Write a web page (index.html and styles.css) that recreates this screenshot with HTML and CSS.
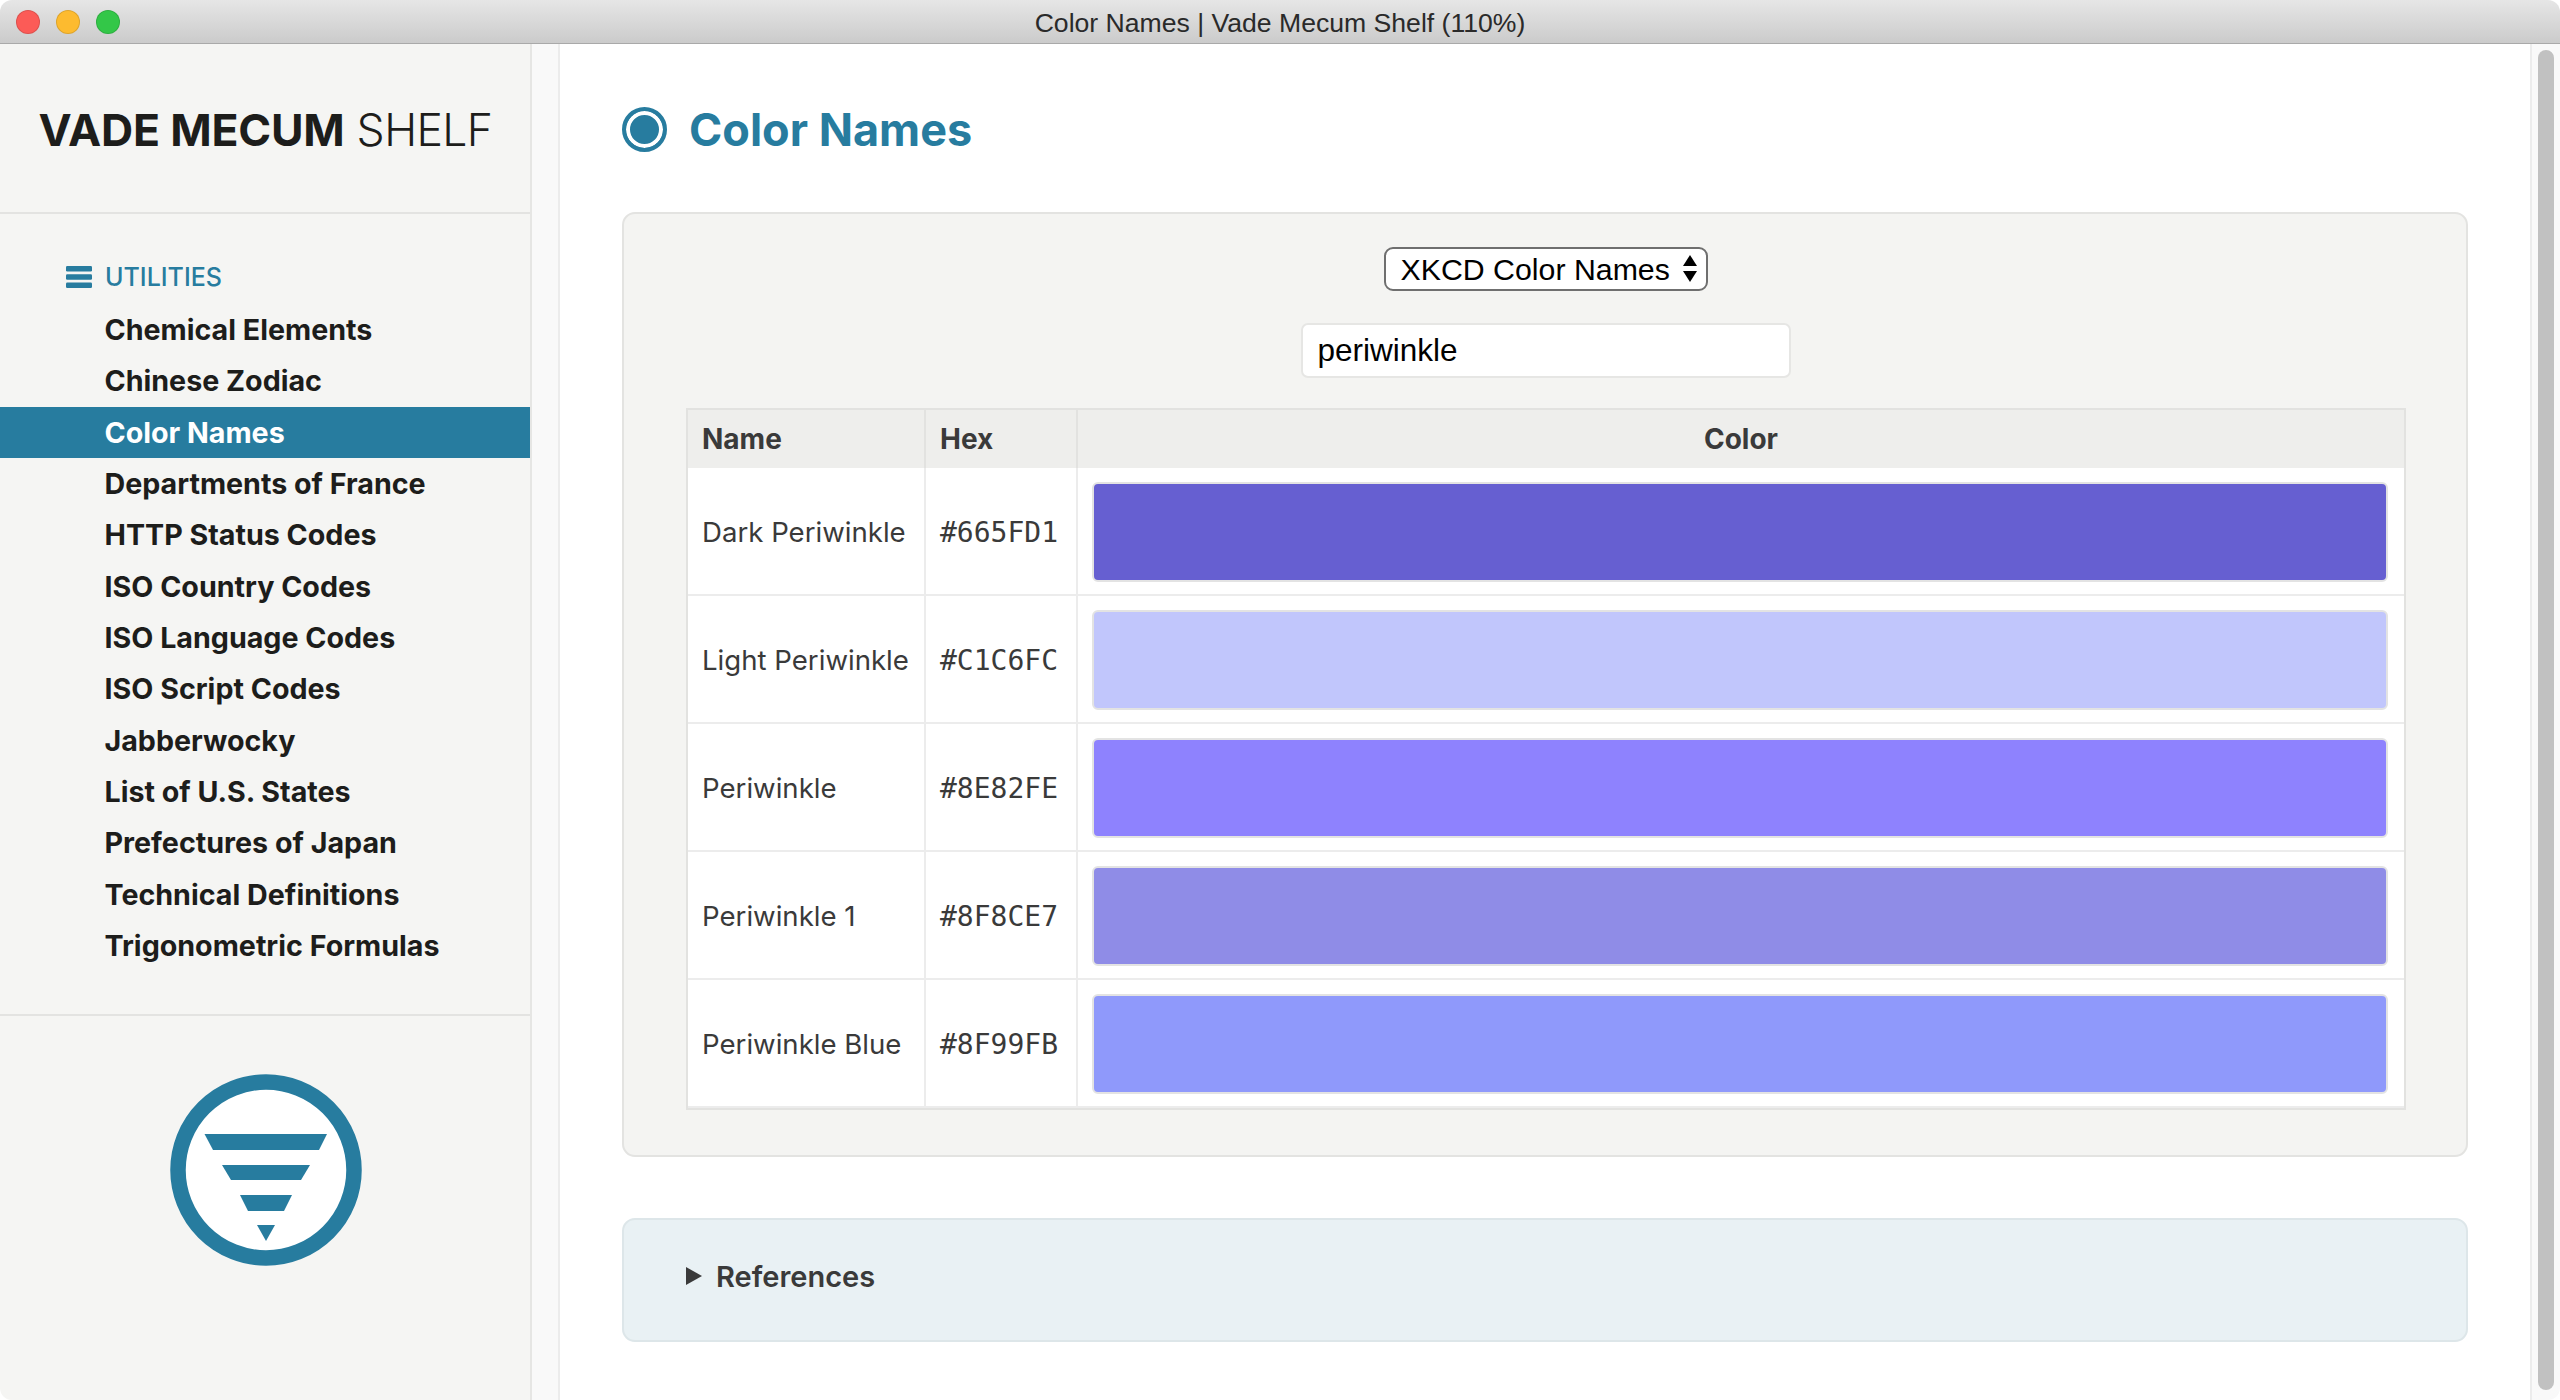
FILE: index.html
```html
<!DOCTYPE html>
<html lang="en">
<head>
    <meta charset="UTF-8">
    <title>Color Names | Vade Mecum Shelf (110%)</title>
    <link rel="stylesheet" href="styles.css">
</head>
<body>
    <div class="window">
        <div class="titlebar">
            <div class="lights">
                <span class="light light-red"></span>
                <span class="light light-yellow"></span>
                <span class="light light-green"></span>
            </div>
            <div class="window-title">Color Names | Vade Mecum Shelf (110%)</div>
        </div>

        <div class="app">
            <aside class="sidebar">
                <div class="brand"><b>VADE MECUM</b> SHELF</div>

                <nav class="nav">
                    <div class="nav-heading">
                        <svg class="nav-icon" viewBox="0 0 26 22">
                            <rect x="0" y="0" width="26" height="5.4" rx="1.2"/>
                            <rect x="0" y="8.3" width="26" height="5.4" rx="1.2"/>
                            <rect x="0" y="16.6" width="26" height="5.4" rx="1.2"/>
                        </svg>
                        <span>UTILITIES</span>
                    </div>
                    <a class="nav-item" href="#">Chemical Elements</a>
                    <a class="nav-item" href="#">Chinese Zodiac</a>
                    <a class="nav-item active" href="#">Color Names</a>
                    <a class="nav-item" href="#">Departments of France</a>
                    <a class="nav-item" href="#">HTTP Status Codes</a>
                    <a class="nav-item" href="#">ISO Country Codes</a>
                    <a class="nav-item" href="#">ISO Language Codes</a>
                    <a class="nav-item" href="#">ISO Script Codes</a>
                    <a class="nav-item" href="#">Jabberwocky</a>
                    <a class="nav-item" href="#">List of U.S. States</a>
                    <a class="nav-item" href="#">Prefectures of Japan</a>
                    <a class="nav-item" href="#">Technical Definitions</a>
                    <a class="nav-item" href="#">Trigonometric Formulas</a>
                </nav>

                <div class="sidebar-logo">
                    <svg viewBox="0 0 192 192" width="192" height="192">
                        <circle cx="96" cy="96" r="88" fill="#ffffff" stroke="#277c9f" stroke-width="15.5"/>
                        <g fill="#277c9f">
                            <polygon points="34.5,60 157,60 149,76 43,76"/>
                            <polygon points="52,91 140,91 131,106 61,106"/>
                            <polygon points="70,121 122,121 114,137 78,137"/>
                            <polygon points="87,151 105,151 96,167"/>
                        </g>
                    </svg>
                </div>
            </aside>

            <div class="gutter"></div>

            <main class="content">
                <h1 class="page-title">
                    <span class="title-icon"></span>
                    Color Names
                </h1>

                <section class="card">
                    <div class="select-wrap">
                        <select class="list-select">
                            <option>XKCD Color Names</option>
                        </select>
                        <svg class="select-arrows" viewBox="0 0 14 27">
                            <polygon points="7,0 14,11 0,11"/>
                            <polygon points="0,16 14,16 7,27"/>
                        </svg>
                    </div>

                    <input class="search" type="text" value="periwinkle">

                    <table class="colors">
                        <thead>
                            <tr>
                                <th class="col-name">Name</th>
                                <th class="col-hex">Hex</th>
                                <th class="col-color">Color</th>
                            </tr>
                        </thead>
                        <tbody>
                            <tr>
                                <td class="cell-name">Dark Periwinkle</td>
                                <td class="cell-hex">#665FD1</td>
                                <td class="cell-color"><div class="swatch" style="background-color: #665FD1"></div></td>
                            </tr>
                            <tr>
                                <td class="cell-name">Light Periwinkle</td>
                                <td class="cell-hex">#C1C6FC</td>
                                <td class="cell-color"><div class="swatch" style="background-color: #C1C6FC"></div></td>
                            </tr>
                            <tr>
                                <td class="cell-name">Periwinkle</td>
                                <td class="cell-hex">#8E82FE</td>
                                <td class="cell-color"><div class="swatch" style="background-color: #8E82FE"></div></td>
                            </tr>
                            <tr>
                                <td class="cell-name">Periwinkle 1</td>
                                <td class="cell-hex">#8F8CE7</td>
                                <td class="cell-color"><div class="swatch" style="background-color: #8F8CE7"></div></td>
                            </tr>
                            <tr>
                                <td class="cell-name">Periwinkle Blue</td>
                                <td class="cell-hex">#8F99FB</td>
                                <td class="cell-color"><div class="swatch" style="background-color: #8F99FB"></div></td>
                            </tr>
                        </tbody>
                    </table>
                </section>

                <section class="references">
                    <span class="ref-arrow"></span>
                    <span>References</span>
                </section>
            </main>

            <div class="scrollbar">
                <div class="scroll-thumb"></div>
            </div>
        </div>
    </div>
</body>
</html>
```

FILE: styles.css
```css
html, body {
    margin: 0;
    padding: 0;
    height: 100%;
    background-color: #ffffff;
    overflow: hidden;
}
body {
    font-family: Inter, "Noto Sans", sans-serif;
    color: #3a3a3a;
}
.window {
    height: 1400px;
    display: flex;
    flex-direction: column;
    border-radius: 12px;
    overflow: hidden;
}
.titlebar {
    height: 44px;
    flex: none;
    box-sizing: border-box;
    display: flex;
    align-items: center;
    position: relative;
    background: linear-gradient(#e6e6e6, #cbcbcb);
    border-bottom: 1px solid #a9a9a9;
}
.lights {
    display: flex;
    gap: 16px;
    padding-left: 16px;
}
.light {
    width: 24px;
    height: 24px;
    box-sizing: border-box;
    border-radius: 50%;
    border: 1px solid rgba(0, 0, 0, 0.12);
}
.light-red { background-color: #fc5b57; }
.light-yellow { background-color: #fdbb2f; }
.light-green { background-color: #33c748; }
.window-title {
    position: absolute;
    left: 0;
    right: 0;
    top: 8px;
    text-align: center;
    font-family: "Liberation Sans", sans-serif;
    font-size: 26.6px;
    color: #2a2a2a;
}
.app {
    flex: 1;
    display: flex;
    min-height: 0;
}
.sidebar {
    width: 532px;
    flex: none;
    box-sizing: border-box;
    background-color: #f5f5f3;
    border-right: 2px solid #e6e6e4;
    display: flex;
    flex-direction: column;
}
.brand {
    height: 170px;
    box-sizing: border-box;
    padding: 4px 0 0 1px;
    display: flex;
    align-items: center;
    justify-content: center;
    gap: 12px;
    font-size: 44.5px;
    font-weight: 300;
    letter-spacing: -0.6px;
    color: #1d1d1b;
    border-bottom: 2px solid #e3e3e1;
}
.brand b {
    font-weight: 700;
    letter-spacing: -0.2px;
}
.nav {
    padding: 36px 0 43px;
    border-bottom: 2px solid #e3e3e1;
}
.nav-heading {
    height: 54px;
    display: flex;
    align-items: center;
    gap: 13px;
    padding-left: 66px;
    font-size: 25px;
    font-weight: 500;
    color: #277c9f;
}
.nav-icon {
    width: 26px;
    height: 22px;
    fill: #277c9f;
}
.nav-item {
    display: block;
    height: 51.33px;
    line-height: 51.33px;
    padding-left: 104.5px;
    font-size: 28.65px;
    font-weight: 700;
    color: #1d1d1b;
    text-decoration: none;
}
.nav-item.active {
    background-color: #277c9f;
    color: #ffffff;
}
.sidebar-logo {
    display: flex;
    justify-content: center;
    padding: 58px 0 0 2px;
}
.gutter {
    width: 28px;
    flex: none;
    box-sizing: border-box;
    background-color: #f9f9f9;
    border-right: 2px solid #ececec;
}
.content {
    flex: 1;
    min-width: 0;
    padding: 0 62px;
}
.page-title {
    height: 168px;
    box-sizing: border-box;
    margin: 0;
    padding-top: 2px;
    display: flex;
    align-items: center;
    gap: 22px;
    font-size: 45px;
    font-weight: 700;
    color: #277c9f;
}
.title-icon {
    width: 45px;
    height: 45px;
    box-sizing: border-box;
    border-radius: 50%;
    border: 4px solid #277c9f;
    background-color: #277c9f;
    box-shadow: inset 0 0 0 4px #ffffff;
}
.card {
    box-sizing: border-box;
    background-color: #f4f4f2;
    border: 2px solid #e3e3e1;
    border-radius: 13px;
    padding: 33px 60px 45px 62px;
    display: flex;
    flex-direction: column;
    align-items: center;
}
.select-wrap {
    position: relative;
    height: 44px;
    margin-right: 1px;
}
.list-select {
    appearance: none;
    height: 44px;
    width: 324px;
    box-sizing: border-box;
    padding: 0 0 0 15px;
    border: 2px solid #6f6f6f;
    border-radius: 9px;
    background-color: #ffffff;
    font-family: "Liberation Sans", sans-serif;
    font-size: 30.3px;
    color: #000000;
}
.select-arrows {
    position: absolute;
    top: 8px;
    right: 11px;
    width: 14px;
    height: 27px;
    fill: #000000;
}
.search {
    display: block;
    margin: 32px 1px 30px 0;
    width: 490px;
    height: 55px;
    box-sizing: border-box;
    padding: 0 15px;
    border: 2px solid #e6e6e4;
    border-radius: 7px;
    background-color: #ffffff;
    font-family: "Liberation Sans", sans-serif;
    font-size: 31.5px;
    color: #000000;
}
.colors {
    width: 100%;
    table-layout: fixed;
    border-collapse: separate;
    border-spacing: 0;
    background-color: #ffffff;
    border: 2px solid #e2e2e0;
}
.colors th {
    height: 58px;
    padding: 0 14px;
    box-sizing: border-box;
    background-color: #eeeeec;
    border-left: 2px solid #e2e2e0;
    font-size: 28px;
    font-weight: 700;
    text-align: left;
}
.colors th.col-name {
    border-left: none;
    width: 236px;
}
.colors th.col-hex {
    width: 152px;
}
.colors th.col-color {
    text-align: center;
}
.colors td {
    height: 128px;
    padding: 2px 0 0;
    box-sizing: border-box;
    border-left: 2px solid #ececec;
    border-bottom: 2px solid #ececec;
    font-size: 27.6px;
    font-weight: 400;
    white-space: nowrap;
}
.colors td.cell-name {
    border-left: none;
    padding-left: 14px;
}
.colors td.cell-hex {
    padding-left: 14px;
    font-family: "DejaVu Sans Mono", monospace;
    font-size: 28px;
}
.colors td.cell-color {
    padding-left: 14px;
    padding-right: 16px;
}
.swatch {
    height: 100px;
    box-sizing: border-box;
    border: 2px solid #e3e3e3;
    border-radius: 6px;
}
.references {
    margin-top: 61px;
    height: 124px;
    box-sizing: border-box;
    background-color: #e9f1f4;
    border: 2px solid #dde6e9;
    border-radius: 13px;
    padding: 0 0 8px 62px;
    display: flex;
    align-items: center;
    gap: 14px;
    font-size: 29px;
    font-weight: 600;
}
.ref-arrow {
    width: 0;
    height: 0;
    border-style: solid;
    border-width: 9.5px 0 9.5px 16px;
    border-color: transparent transparent transparent #3a3a3a;
}
.scrollbar {
    width: 30px;
    flex: none;
    box-sizing: border-box;
    padding: 6px 6px 10px 6px;
    background-color: #f9f9f9;
    border-left: 2px solid #ececec;
}
.scroll-thumb {
    height: 100%;
    width: 16px;
    border-radius: 8px;
    background-color: #c1c1c1;
}
```
